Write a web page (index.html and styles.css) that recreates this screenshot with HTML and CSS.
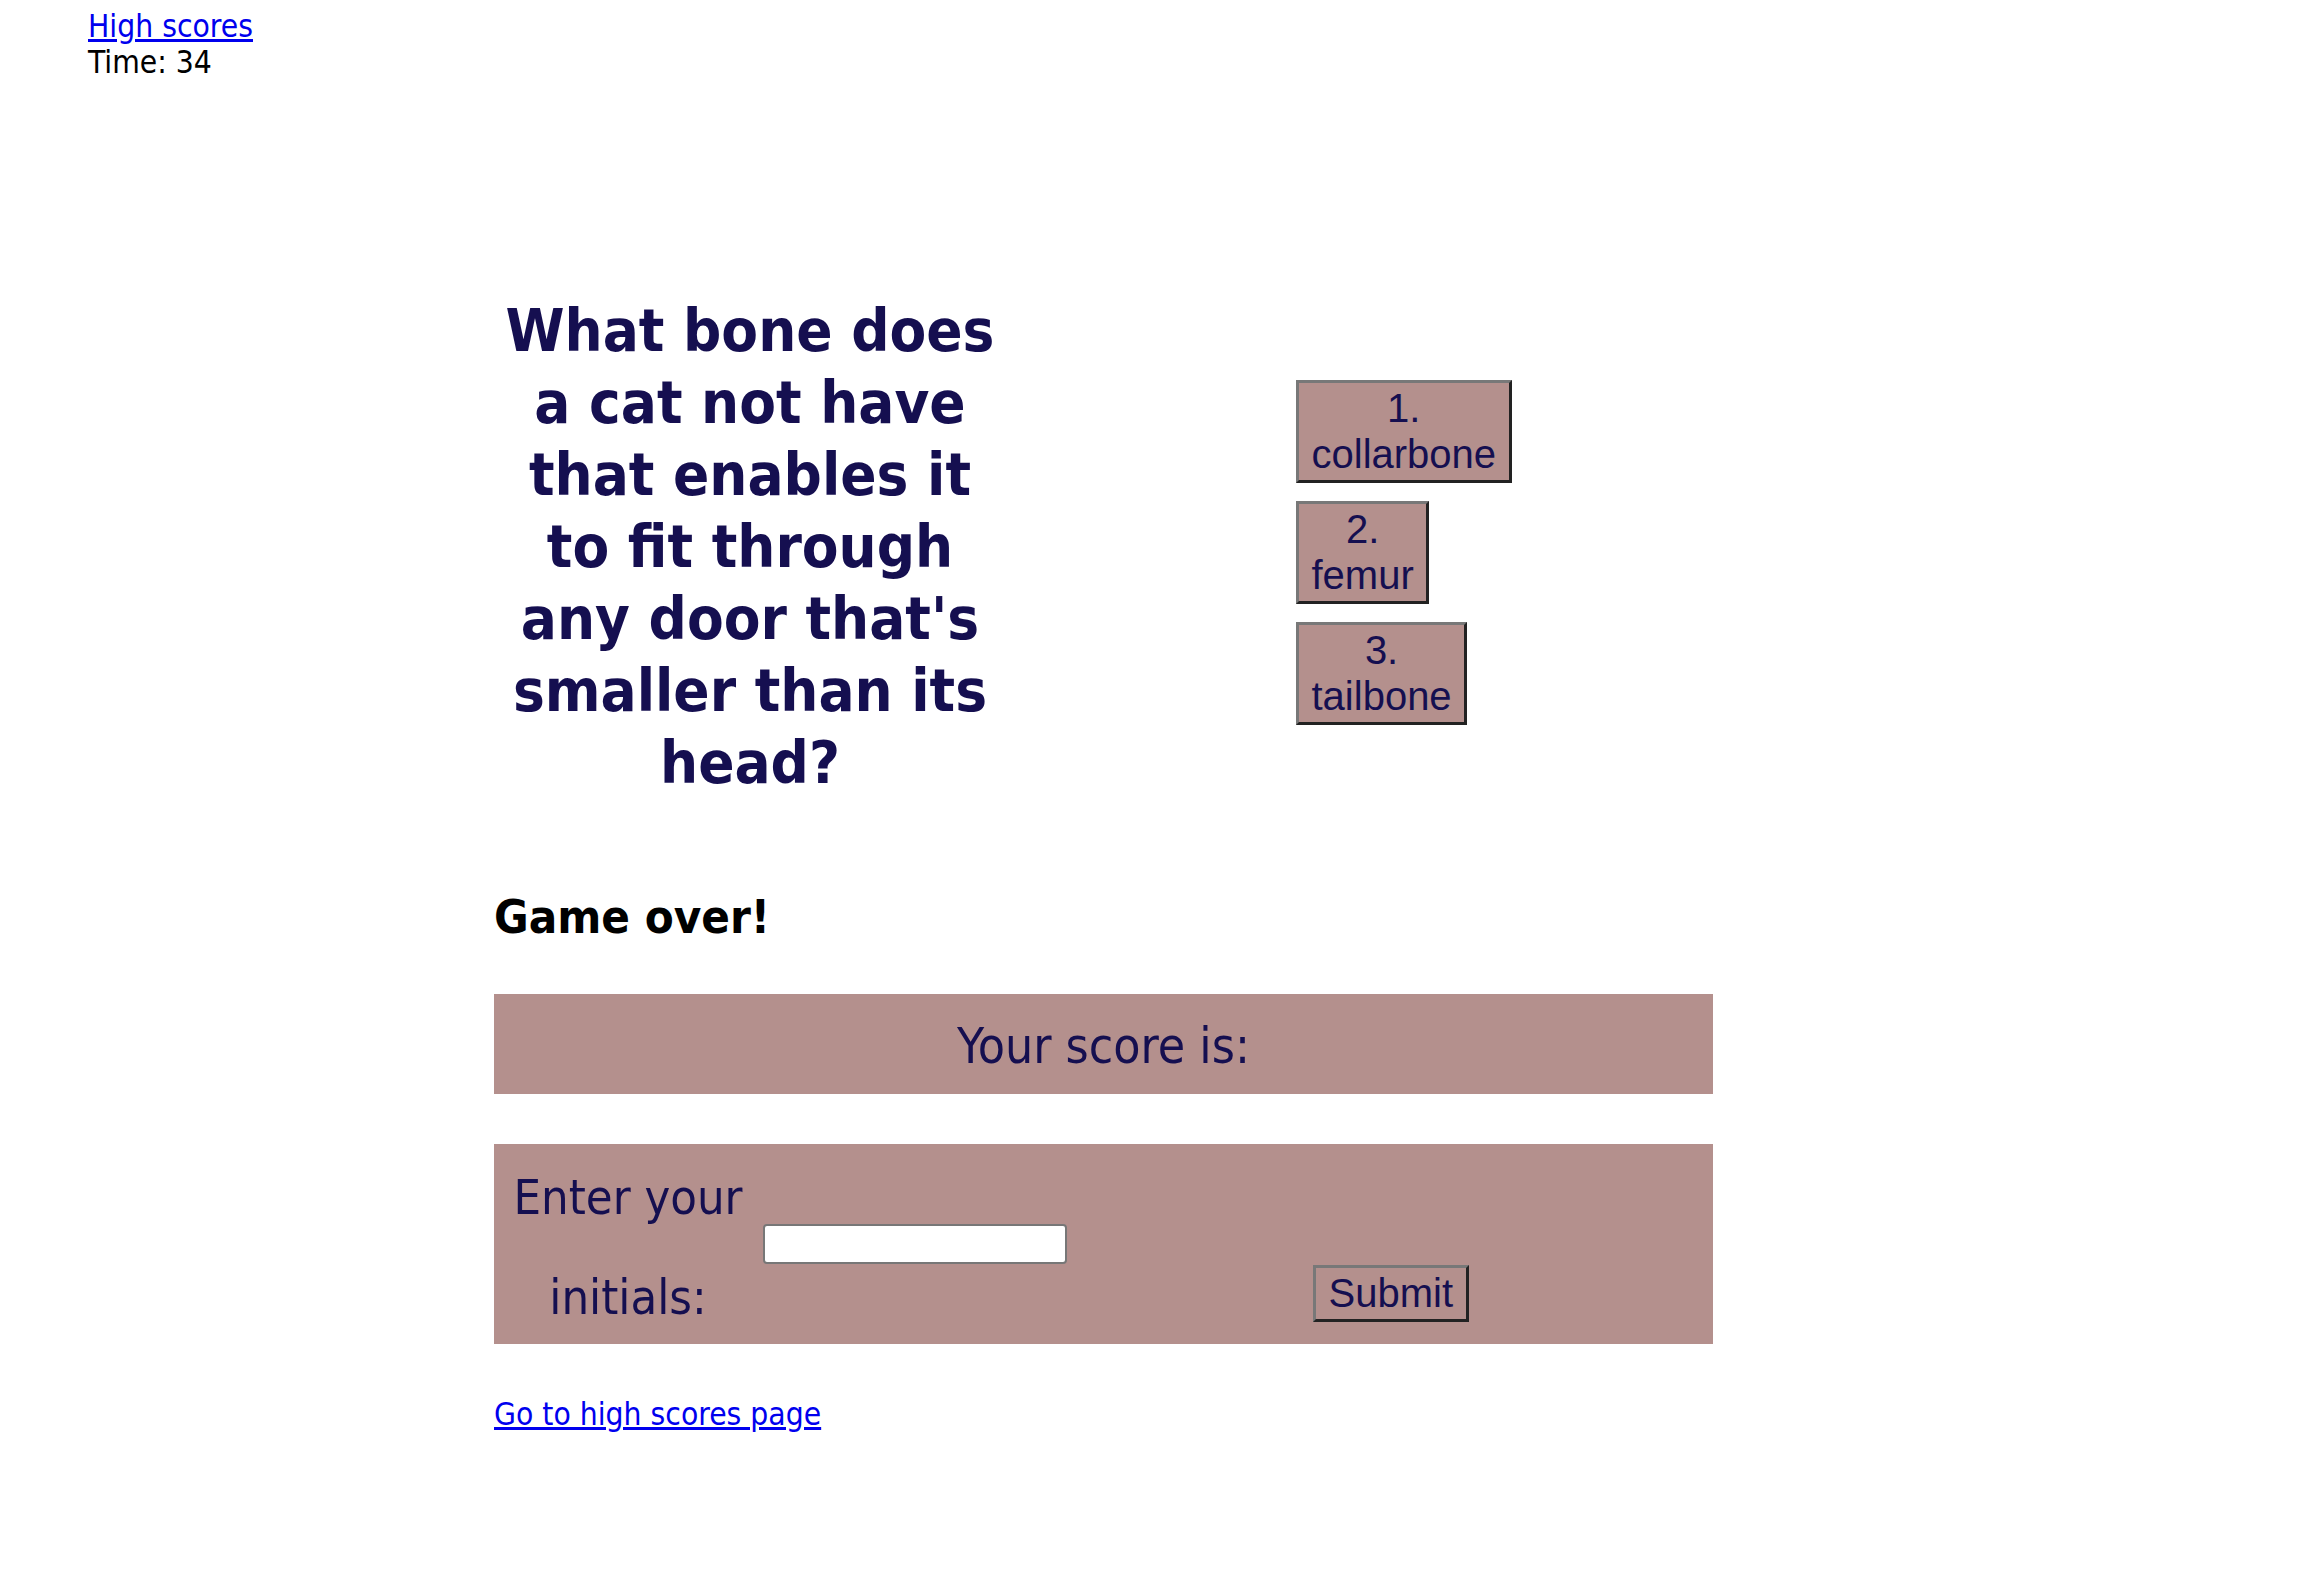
FILE: index.html
```html
<!DOCTYPE html>
<html lang="en">
<head>
<meta charset="utf-8">
<title>Quiz</title>
<link rel="stylesheet" href="styles.css">
</head>
<body>
<header class="top">
  <a href="#" class="hs-link">High scores</a>
  <div class="timer">Time: 34</div>
</header>
<main class="quiz">
  <section class="question-row">
    <h1 class="question">What bone does a cat not have that enables it to fit through any door that's smaller than its head?</h1>
    <div class="answers">
      <button class="answer" type="button">1. collarbone</button>
      <button class="answer" type="button">2. femur</button>
      <button class="answer" type="button">3. tailbone</button>
    </div>
  </section>
  <h2 class="game-over">Game over!</h2>
  <div class="score-box">Your score is:</div>
  <form class="initials-form">
    <label class="initials-label" for="initials">Enter your initials:</label>
    <input id="initials" class="initials-input" type="text">
    <button class="submit-btn" type="submit">Submit</button>
  </form>
  <div class="go-wrap"><a href="#" class="go-link">Go to high scores page</a></div>
</main>
</body>
</html>
```
FILE: styles.css
```css
body {
  margin: 8px;
  font-family: "DejaVu Sans Condensed", "DejaVu Sans", sans-serif;
  font-size: 31.5px;
  line-height: 36px;
  color: #000;
  background: #fff;
}

a {
  color: #0000ee;
}

.top {
  margin-left: 80px;
}

.quiz {
  margin-left: 486px;
  width: 1219px;
  margin-top: 215px;
}

.question-row {
  display: flex;
  align-items: flex-start;
}

.question {
  margin: 0;
  width: 512px;
  font-size: 59.5px;
  line-height: 72px;
  font-weight: bold;
  text-align: center;
  color: #150f50;
}

.answers {
  margin-left: 290px;
  margin-top: 85px;
  display: flex;
  flex-direction: column;
  align-items: flex-start;
  gap: 18px;
}

.answer,
.submit-btn {
  font-family: "Liberation Sans", Arial, sans-serif;
  font-size: 40px;
  line-height: 46px;
  color: #150f50;
  background: #b4908d;
  border: 3px solid;
  border-color: #787878 #222222 #222222 #787878;
  padding: 2px 12.5px 3px;
  text-align: center;
  margin: 0;
  box-sizing: content-box;
}

.answer {
  width: min-content;
}

.game-over {
  margin: 90px 0 49px;
  font-size: 47px;
  line-height: 56px;
  font-weight: bold;
}

.score-box {
  background: #b4908d;
  color: #150f50;
  font-size: 49.5px;
  line-height: 57px;
  text-align: center;
  height: 100px;
  box-sizing: border-box;
  padding-top: 24px;
}

.initials-form {
  display: flex;
  height: 200px;
  margin-top: 50px;
  padding-left: 14px;
  background: #b4908d;
  color: #150f50;
}

.initials-label {
  align-self: flex-start;
  width: 240px;
  margin-top: 3px;
  font-size: 48.5px;
  line-height: 100px;
  text-align: center;
}

.initials-input {
  align-self: center;
  width: 304px;
  height: 40px;
  box-sizing: border-box;
  margin: 0 0 0 15px;
  border: 2px solid #777777;
  border-radius: 4px;
  background: #fff;
}

.submit-btn {
  align-self: flex-end;
  margin: 0 0 22px 246px;
}

.go-wrap {
  margin-top: 52px;
}
```
